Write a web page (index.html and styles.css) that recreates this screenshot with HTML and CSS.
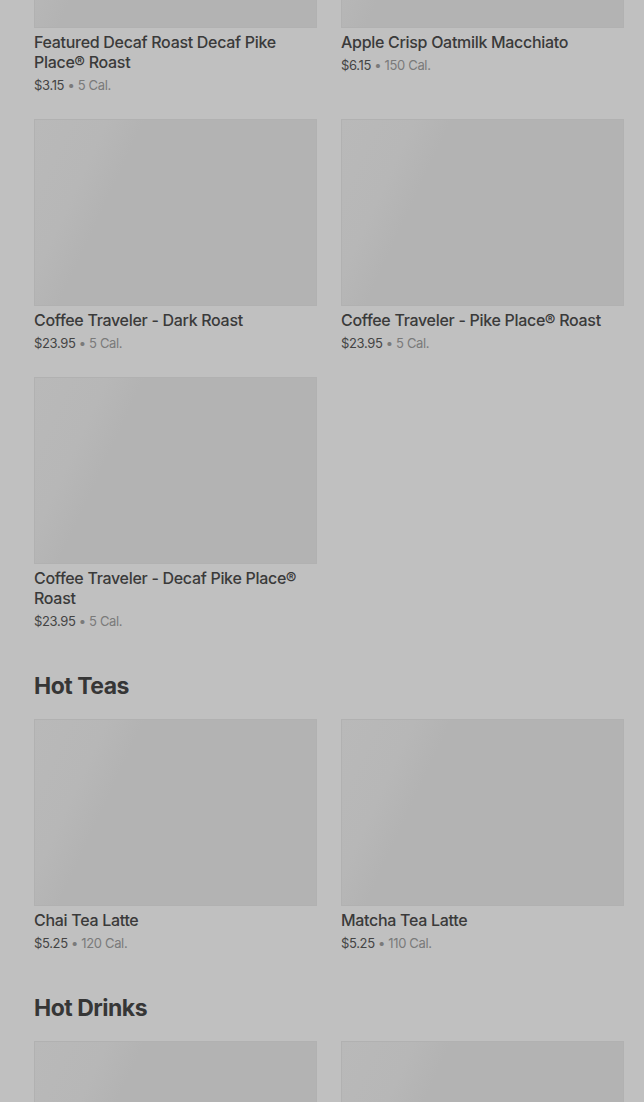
FILE: index.html
```html
<!DOCTYPE html>
<html lang="en">
<head>
  <meta charset="UTF-8" />
  <meta name="viewport" content="width=device-width, initial-scale=1.0" />
  <title>Menu</title>
  <link rel="stylesheet" href="styles.css">
</head>
<body>
  <div class="menu">
    <section class="category">
      <div class="grid">
        <div class="item">
          <div class="thumb"></div>
          <div class="name">Featured Decaf Roast Decaf Pike Place® Roast</div>
          <div class="meta"><span class="price">$3.15</span> • 5 Cal.</div>
        </div>
        <div class="item">
          <div class="thumb"></div>
          <div class="name">Apple Crisp Oatmilk Macchiato</div>
          <div class="meta"><span class="price">$6.15</span> • 150 Cal.</div>
        </div>
        <div class="item">
          <div class="thumb"></div>
          <div class="name">Coffee Traveler - Dark Roast</div>
          <div class="meta"><span class="price">$23.95</span> • 5 Cal.</div>
        </div>
        <div class="item">
          <div class="thumb"></div>
          <div class="name">Coffee Traveler - Pike Place® Roast</div>
          <div class="meta"><span class="price">$23.95</span> • 5 Cal.</div>
        </div>
        <div class="item">
          <div class="thumb"></div>
          <div class="name">Coffee Traveler - Decaf Pike Place® Roast</div>
          <div class="meta"><span class="price">$23.95</span> • 5 Cal.</div>
        </div>
      </div>
    </section>

    <section class="category">
      <h2>Hot Teas</h2>
      <div class="grid">
        <div class="item">
          <div class="thumb"></div>
          <div class="name">Chai Tea Latte</div>
          <div class="meta"><span class="price">$5.25</span> • 120 Cal.</div>
        </div>
        <div class="item">
          <div class="thumb"></div>
          <div class="name">Matcha Tea Latte</div>
          <div class="meta"><span class="price">$5.25</span> • 110 Cal.</div>
        </div>
      </div>
    </section>

    <section class="category">
      <h2>Hot Drinks</h2>
      <div class="grid">
        <div class="item">
          <div class="thumb"></div>
        </div>
        <div class="item">
          <div class="thumb"></div>
        </div>
      </div>
    </section>
  </div>
</body>
</html>
```

FILE: styles.css
```css
html, body { margin: 0; padding: 0; height: 100%; overflow: hidden; }
body { font-family: Inter, "Noto Sans", sans-serif; background: #c0c0c0; color: #363636; }
.menu { padding: 0 20px 0 34px; margin-top: -159px; }
.category { margin-bottom: 39px; }
.category h2 { margin: 0 0 17px; font-size: 23px; line-height: 32px; font-weight: 700; letter-spacing: -0.5px; color: #363636; }
.grid { display: grid; grid-template-columns: 283px 283px; column-gap: 24px; row-gap: 24px; }
.thumb { height: 187px; background: linear-gradient(115deg, #b9b9b9 0%, #b7b7b7 20%, #b3b3b3 30%, #b3b3b3 100%); box-shadow: inset 0 0 0 1px #b1b1b1; }
.name { margin-top: 4px; font-size: 16px; line-height: 20px; font-weight: 500; letter-spacing: -0.3px; color: #3a3a3a; }
.meta { margin-top: 3px; font-size: 13px; line-height: 20px; letter-spacing: -0.35px; color: #7a7a7a; }
.price { color: #444; }
```
